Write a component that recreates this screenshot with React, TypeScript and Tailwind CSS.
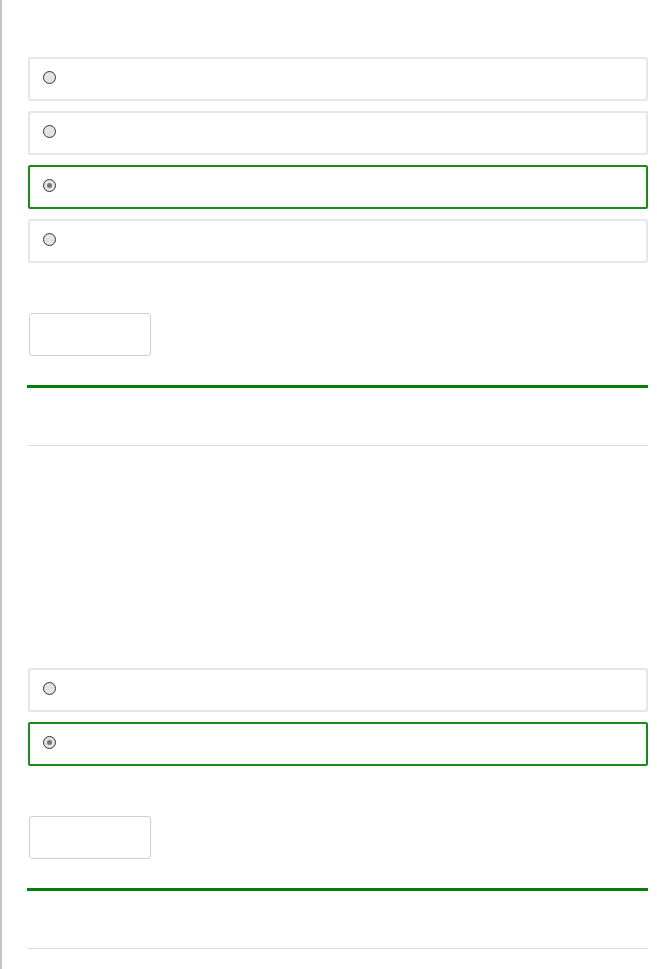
const questions = [
  { options: 4, selected: 2, spaceBefore: "pt-[57px]" },
  { options: 2, selected: 1, spaceBefore: "pt-[222px]" },
];

function Radio({ checked }: { checked: boolean }) {
  return (
    <span className="mb-[3px] flex h-[13px] w-[13px] items-center justify-center rounded-full border border-[#333] bg-[#e3e3e3]">
      {checked && <span className="h-[5px] w-[5px] rounded-full bg-[#777]" />}
    </span>
  );
}

function Question({ options, selected, spaceBefore }: { options: number; selected: number; spaceBefore: string }) {
  return (
    <section className={spaceBefore}>
      <div className="flex flex-col gap-[10px] pl-[1px]">
        {Array.from({ length: options }).map((_, i) => (
          <label
            key={i}
            className={
              i === selected
                ? "flex h-[44px] items-center rounded-[2px] border-2 border-[#1b8a1b] pl-[13px]"
                : "flex h-[44px] items-center rounded-[2px] border-2 border-[#e6e6e6] pl-[13px]"
            }
          >
            <Radio checked={i === selected} />
          </label>
        ))}
      </div>
      <div className="pt-[50px] pl-[2px]">
        <button className="block h-[43px] w-[122px] rounded-[3px] border border-[#cfcfcf] bg-white" />
      </div>
      <div className="mt-[29px] h-[3px] bg-[#087d08]" />
      <div className="mt-[57px] h-px bg-[#dcdcdc]" />
    </section>
  );
}

export default function App() {
  return (
    <div className="min-h-[969px] border-l-2 border-[#c4c4c4] bg-white font-['Liberation_Sans',sans-serif]">
      <div className="pl-[25px] pr-[9px]">
        {questions.map((q, i) => (
          <Question key={i} {...q} />
        ))}
      </div>
    </div>
  );
}
